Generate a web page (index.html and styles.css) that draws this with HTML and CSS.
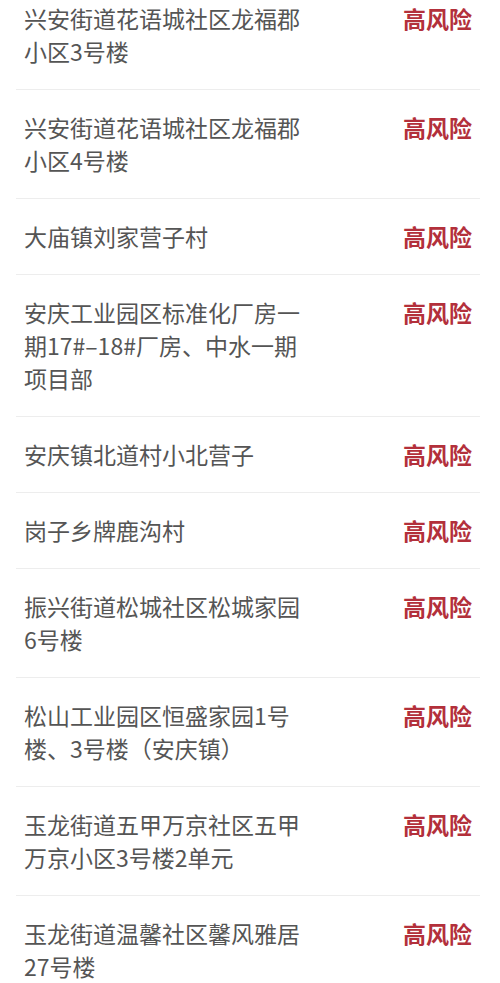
FILE: index.html
```html
<!DOCTYPE html>
<html lang="zh-CN">
<head>
<meta charset="utf-8">
<link rel="stylesheet" href="styles.css">
</head>
<body>
<ul class="list">
  <li class="row"><span class="place">兴安街道花语城社区龙福郡小区3号楼</span><span class="risk">高风险</span></li>
  <li class="row"><span class="place">兴安街道花语城社区龙福郡小区4号楼</span><span class="risk">高风险</span></li>
  <li class="row"><span class="place">大庙镇刘家营子村</span><span class="risk">高风险</span></li>
  <li class="row"><span class="place">安庆工业园区标准化厂房一期17#–18#厂房、中水一期项目部</span><span class="risk">高风险</span></li>
  <li class="row"><span class="place">安庆镇北道村小北营子</span><span class="risk">高风险</span></li>
  <li class="row"><span class="place">岗子乡牌鹿沟村</span><span class="risk">高风险</span></li>
  <li class="row"><span class="place">振兴街道松城社区松城家园6号楼</span><span class="risk">高风险</span></li>
  <li class="row"><span class="place">松山工业园区恒盛家园1号楼、3号楼（安庆镇）</span><span class="risk">高风险</span></li>
  <li class="row"><span class="place">玉龙街道五甲万京社区五甲万京小区3号楼2单元</span><span class="risk">高风险</span></li>
  <li class="row"><span class="place">玉龙街道温馨社区馨风雅居27号楼</span><span class="risk">高风险</span></li>
</ul>
</body>
</html>
```
FILE: styles.css
```css
html, body {
  margin: 0;
  padding: 0;
  background: #ffffff;
}
body {
  font-family: "Noto Sans CJK SC", "Noto Sans", sans-serif;
  overflow: hidden;
}
.list {
  list-style: none;
  margin: -19px 20px 0 16px;
  padding: 0;
}
.row {
  display: flex;
  justify-content: space-between;
  align-items: flex-start;
  padding: 21px 8px 21px 8px;
  border-bottom: 1px solid #ededed;
  font-size: 23px;
  line-height: 33px;
}
.place {
  width: 285px;
  color: #555555;
  font-weight: 400;
}
.risk {
  color: #b3303b;
  font-weight: 700;
  white-space: nowrap;
}
```
